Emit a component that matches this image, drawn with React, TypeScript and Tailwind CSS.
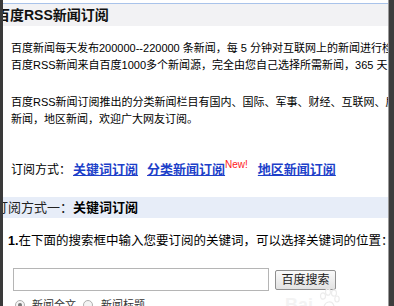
export default function App() {
  const cjk = { fontFamily: '"Liberation Sans", "Noto Sans CJK SC", sans-serif' };
  return (
    <div className="flex h-[306px] w-[394px] overflow-hidden bg-white" style={cjk}>
      <div className="w-[3px] shrink-0 bg-[#3a3a3a]" />
      <div className="relative flex-1 overflow-hidden whitespace-nowrap text-black">
        <div className="h-[3px] bg-white" />
        <div className="h-[1px] bg-[#a9c3ea]" />
        <div className="flex h-[22px] items-center bg-[#f2f2f4]">
          <h1 className="ml-[-7px] text-[14px] font-bold leading-none text-[#111]">百度RSS新闻订阅</h1>
        </div>

        <div className="mt-[14px] pl-[8px] text-[11px] leading-[17px]">
          <p>百度新闻每天发布200000--220000 条新闻，每 5 分钟对互联网上的新闻进行检索更新</p>
          <p>百度RSS新闻来自百度1000多个新闻源，完全由您自己选择所需新闻，365 天、24小时不间断</p>
        </div>

        <div className="mt-[20px] pl-[8px] text-[11px] leading-[17px]">
          <p>百度RSS新闻订阅推出的分类新闻栏目有国内、国际、军事、财经、互联网、房产、汽车</p>
          <p>新闻，地区新闻，欢迎广大网友订阅。</p>
        </div>

        <div className="mt-[32px] flex h-[20px] items-center pl-[8px] text-[12px]">
          <span className="mr-[2px]">订阅方式：</span>
          <a className="text-[13px] font-bold text-[#1d3fc9] underline">关键词订阅</a>
          <a className="ml-[9px] text-[13px] font-bold text-[#1d3fc9] underline">分类新闻订阅</a>
          <span className="relative top-[-5px] text-[10px] leading-none text-[#ff2020]">New!</span>
          <a className="ml-[10px] text-[13px] font-bold text-[#1d3fc9] underline">地区新闻订阅</a>
        </div>

        <div className="mt-[17px] flex h-[21px] items-center bg-[#e7edf8] text-[13px]">
          <span className="ml-[-8px] text-[#222]">订阅方式一：</span>
          <span className="font-bold">关键词订阅</span>
        </div>

        <div className="mt-[15px] flex h-[16px] items-center pl-[5px] text-[12.5px]">
          <span className="font-bold">1.</span>
          <span>在下面的搜索框中输入您要订阅的关键词，可以选择关键词的位置：</span>
        </div>

        <div className="mt-[19px] flex items-center pl-[10px]">
          <div className="h-[23px] w-[256px] border border-[#b5b5b5] bg-white" />
          <button className="ml-[6px] h-[20px] w-[61px] rounded-[2px] border border-[#8f8f8f] bg-gradient-to-b from-[#fafafa] to-[#e2e2e2] text-[12px] leading-none text-[#222]">
            百度搜索
          </button>
        </div>

        <div className="mt-[6px] flex items-center pl-[12px] text-[11px] text-[#333]">
          <span className="flex h-[10px] w-[10px] items-center justify-center rounded-full border border-[#b0b0b0] bg-[#f4f4f4]">
            <span className="h-[4px] w-[4px] rounded-full bg-[#777]" />
          </span>
          <span className="ml-[7px]">新闻全文</span>
          <span className="ml-[7px] h-[10px] w-[10px] rounded-full border border-[#b0b0b0] bg-[#f4f4f4]" />
          <span className="ml-[8px]">新闻标题</span>
        </div>

        <div className="absolute left-[282px] top-[292px] text-[18px] font-bold text-[#f3f3f3]">
          Bai
          <svg className="absolute left-[32px] top-[-4px]" width="24" height="24" viewBox="0 0 24 24">
            <g fill="none" stroke="#ececec" strokeWidth="1.2">
              <ellipse cx="6" cy="8" rx="2.5" ry="3.2" />
              <ellipse cx="11" cy="4" rx="2.5" ry="3.2" />
              <ellipse cx="17" cy="5" rx="2.5" ry="3.2" />
              <ellipse cx="20" cy="11" rx="2.2" ry="3" />
              <path d="M7 19 C8 13 15 12 17 18 C18 22 8 23 7 19 Z" />
            </g>
          </svg>
        </div>
      </div>
      <div className="flex w-[6px] shrink-0">
        <div className="w-[1px] bg-[#9a9a9a]" />
        <div className="flex-1 bg-[#3d3d3d]" />
      </div>
    </div>
  );
}
